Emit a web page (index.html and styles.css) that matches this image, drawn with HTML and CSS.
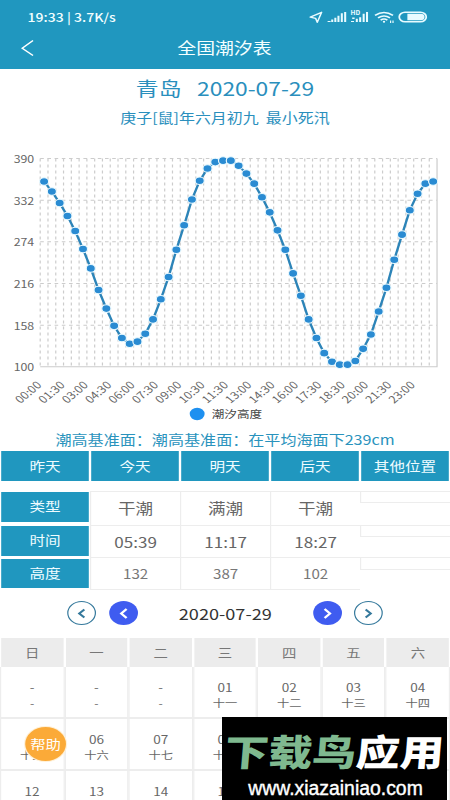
FILE: index.html
```
<!DOCTYPE html>
<html lang="zh-CN">
<head>
    <meta charset="UTF-8">
    <meta name="viewport" content="width=device-width, initial-scale=1.0">
    <title>全国潮汐表</title>
    <link rel="stylesheet" href="styles.css">
</head>

<body>
    <div class="screen">
        <header class="header">
            <div class="status-bar">
                <span>19:33 | 3.7K/s</span>
                <svg class="status-icons" width="104" height="16" viewBox="0 0 104 16">
                    <path d="M1.5 8.2 11 3.3 7.4 13.4 6 9.3Z" fill="none" stroke="#e8fbff" stroke-width="1.3" stroke-linejoin="round"/>
                    <g fill="#e8fbff">
                        <path d="M16 12h2.5v1H16zM19 10.500h1.700V13H19zM21.600 8.700h1.700V13h-1.700zM24.200 6.700h1.700V13h-1.700zM27 4.200h1.700V13H27zM29.800 3h1.700v10h-1.700z"/>
                        <path d="M35.500 12h2.500v1h-2.500zM36.500 8.500h2v1.500h-2zM39.500 9.800h1.700V13h-1.700zM42.300 8.200h1.700V13h-1.700zM45.200 4.800h1.700V13h-1.700zM48 3h1.700v10H48z"/>
                        <text class="hd" x="35" y="6.3">HD</text>
                    </g>
                    <g fill="none" stroke="#e8fbff" stroke-width="1.5">
                        <path d="M55.500 6.300q7.500-5.600 15 0M58 8.800q5-3.800 10 0M60.200 11.100q2.800-2.200 5.600 0"/>
                        <rect x="75.7" y="3.2" width="22.5" height="9.6" rx="4.8"/>
                    </g>
                    <circle cx="63" cy="12.8" r="1" fill="#e8fbff"/>
                    <path d="M68.500 11.500v2.500M70.500 11.500v2.500" stroke="#e8fbff"/>
                    <path d="M82.500 4.700H93.500a3.300 3.300 0 0 1 0 6.600H82.500z" fill="#e8fbff"/>
                </svg>
            </div>
            <div class="title-bar">
                <svg class="back" width="12" height="18" viewBox="0 0 12 18">
                    <path d="M10.5 1.5 1.5 9.2 10.5 16.5" fill="none" stroke="#fff" stroke-width="1.3"/>
                </svg>
                <h1 class="title">全国潮汐表</h1>
            </div>
        </header>

        <div class="place"><span>青岛</span><span>2020-07-29</span></div>
        <div class="lunar-date">庚子[鼠]年六月初九&nbsp; 最小死汛</div>

        <svg class="chart" width="375" height="289" viewBox="0 0 375 289"></svg>

        <div class="note">潮高基准面：潮高基准面：在平均海面下239cm</div>

        <nav class="day-tabs">
            <div class="tab">昨天</div>
            <div class="tab">今天</div>
            <div class="tab">明天</div>
            <div class="tab">后天</div>
            <div class="tab">其他位置</div>
        </nav>

        <div class="tide-table">
            <div class="label">类型</div>
            <div class="cell type">干潮</div>
            <div class="cell type">满潮</div>
            <div class="cell type">干潮</div>
            <div class="cell empty"></div>
            <div class="label">时间</div>
            <div class="cell time">05:39</div>
            <div class="cell time">11:17</div>
            <div class="cell time">18:27</div>
            <div class="cell empty"></div>
            <div class="label">高度</div>
            <div class="cell height">132</div>
            <div class="cell height">387</div>
            <div class="cell height">102</div>
            <div class="cell empty"></div>
        </div>

        <div class="date-nav">
            <div class="nav-btn outline">
                <svg width="8" height="11" viewBox="0 0 8 11"><path d="M6.3 1.5 2 5.5 6.3 9.5"/></svg>
            </div>
            <div class="nav-btn solid">
                <svg width="8" height="11" viewBox="0 0 8 11"><path d="M6.5 1 2 5.5 6.5 10"/></svg>
            </div>
            <div class="nav-date">2020-07-29</div>
            <div class="nav-btn solid">
                <svg width="8" height="11" viewBox="0 0 8 11"><path d="M1.5 1 6 5.5 1.5 10"/></svg>
            </div>
            <div class="nav-btn outline">
                <svg width="8" height="11" viewBox="0 0 8 11"><path d="M1.7 1.5 6 5.5 1.7 9.5"/></svg>
            </div>
        </div>

        <div class="calendar">
            <div class="week">日</div>
            <div class="week">一</div>
            <div class="week">二</div>
            <div class="week">三</div>
            <div class="week">四</div>
            <div class="week">五</div>
            <div class="week">六</div>

            <div class="day">-<span>-</span></div>
            <div class="day">-<span>-</span></div>
            <div class="day">-<span>-</span></div>
            <div class="day">01<span>十一</span></div>
            <div class="day">02<span>十二</span></div>
            <div class="day">03<span>十三</span></div>
            <div class="day">04<span>十四</span></div>

            <div class="day">&nbsp;<span>十五</span></div>
            <div class="day">06<span>十六</span></div>
            <div class="day">07<span>十七</span></div>
            <div class="day">08<span>十八</span></div>
            <div class="day"></div>
            <div class="day"></div>
            <div class="day"></div>

            <div class="day">12</div>
            <div class="day">13</div>
            <div class="day">14</div>
            <div class="day">15</div>
            <div class="day"></div>
            <div class="day"></div>
            <div class="day"></div>
        </div>

        <div class="help">帮助</div>
    </div>

    <div class="watermark">
        <div class="brand"><span class="green">下载鸟</span>应用</div>
        <div class="url">www.xiazainiao.com</div>
    </div>

    <script src="chart.js"></script>
</body>
</html>
```
FILE: styles.css
```
html, body {
    margin: 0;
    height: 800px;
    overflow: hidden;
}

body {
    position: relative;
    background-color: #fff;
    font-family: "Noto Sans CJK SC", sans-serif;
}

.screen {
    position: relative;
    width: 375px;
    height: 800px;
    overflow: hidden;
    transform: scaleX(1.2);
    transform-origin: 0 0;
}

.header {
    height: 68.5px;
    background-color: #2097bf;
    color: #f4ffff;
}
.status-bar {
    display: flex;
    justify-content: space-between;
    padding: 9px 0 0 23px;
    font-size: 11.7px;
    font-weight: 500;
    line-height: 16px;
}
.status-icons {
    width: 104px;
    margin-right: 14px;
}
.hd {
    font-size: 5.5px;
    font-weight: 700;
}
.title-bar {
    display: flex;
    align-items: center;
    height: 46px;
    padding: 0 18px;
}
.back {
    margin-left: -1px;
}
.title {
    flex: 1;
    margin: 0 12px 0 0;
    font-size: 15.7px;
    font-weight: 400;
    line-height: 20px;
    text-align: center;
}

.place {
    display: flex;
    justify-content: center;
    gap: 13px;
    margin-top: 6.5px;
    color: #2a8fbd;
    font-size: 19px;
    line-height: 26px;
}
.lunar-date {
    margin-top: 7px;
    color: #2a8fbd;
    font-size: 13.3px;
    line-height: 20px;
    text-align: center;
}

.chart {
    display: block;
    margin-top: 10px;
}
.chart text {
    fill: #666;
    font-size: 10.3px;
}
.chart .legend {
    fill: #444;
    font-size: 10.5px;
}
.grid {
    stroke: #ccc;
    stroke-width: 1;
    stroke-dasharray: 3 3;
}
.axis {
    fill: none;
    stroke: #ccc;
}
.curve {
    fill: none;
    stroke: #2c84b8;
    stroke-width: 2;
}
.dot {
    fill: #2a8bd2;
    stroke: #e8f9ff;
    stroke-width: 1;
}
.legend-dot {
    fill: #1e90f0;
}

.note {
    height: 24px;
    color: #2a93bd;
    font-size: 13.4px;
    line-height: 25px;
    text-align: center;
}

.day-tabs {
    display: grid;
    grid-template-columns: repeat(5, 1fr);
}
.tab,
.label {
    margin: 0 1px;
    background-color: #2097bf;
    color: #effcff;
    font-size: 13px;
    text-align: center;
}
.tab {
    height: 29.5px;
    line-height: 30px;
}

.tide-table {
    display: grid;
    grid-template-columns: repeat(5, 75px);
    grid-template-rows: 34px 32.5px 33px;
    margin-top: 10px;
}
.label {
    height: 29.5px;
    margin-top: 1.5px;
    line-height: 28px;
}
.cell {
    box-sizing: border-box;
    border: solid #ededed;
    border-width: 1.5px 0 0 1.5px;
    color: #666;
    line-height: 32px;
    text-align: center;
}
.cell.type {
    font-size: 14.6px;
}
.cell.time {
    font-size: 14.2px;
}
.cell.height {
    height: 32.5px;
    border-bottom-width: 1.5px;
    color: #777;
    font-size: 12.6px;
}
.cell.empty {
    height: 12.5px;
    border-bottom-width: 1.5px;
}

.date-nav {
    display: flex;
    align-items: center;
    justify-content: center;
    height: 46.5px;
    padding-bottom: 1.5px;
    margin-left: 0.5px;
}
.nav-btn {
    box-sizing: border-box;
    display: flex;
    align-items: center;
    justify-content: center;
    width: 24px;
    height: 24px;
    border-radius: 50%;
}
.nav-btn + .nav-btn {
    margin-left: 10.5px;
}
.nav-btn path {
    fill: none;
    stroke-width: 1.8;
}
.nav-btn.outline {
    border: 1.5px solid #35799c;
}
.nav-btn.outline path {
    stroke: #35799c;
}
.nav-btn.solid {
    background-color: #3f5cf0;
}
.nav-btn.solid path {
    stroke: #fff;
    stroke-width: 2;
}
.nav-date {
    width: 146px;
    color: #333;
    font-size: 15.1px;
    text-align: center;
}

.calendar {
    display: grid;
    grid-template-columns: repeat(7, 1fr);
    grid-template-rows: 29px repeat(3, 52.2px);
}
.week {
    margin: 0 1px;
    background-color: #ececec;
    color: #777;
    font-size: 12px;
    line-height: 29px;
    text-align: center;
}
.day {
    border: solid #ededed;
    border-width: 0 1px 2px;
    padding-top: 11.5px;
    color: #666;
    font-size: 11.3px;
    line-height: 16px;
    text-align: center;
}
.day span {
    display: block;
    font-size: 10.2px;
}

.help {
    position: absolute;
    top: 727px;
    left: 21px;
    width: 34px;
    height: 34px;
    border-radius: 50%;
    background-color: #fbaa38;
    box-shadow: 0 0 0 1px #fff1d8;
    color: #fff;
    font-size: 12.8px;
    line-height: 34px;
    text-align: center;
}

.watermark {
    position: absolute;
    top: 717px;
    left: 222px;
    width: 225px;
    height: 83px;
    background-color: #000;
    color: #fff;
    text-align: center;
}
.brand {
    height: 55px;
    margin-top: 6px;
    font-size: 36.5px;
    font-weight: 900;
    line-height: 56px;
    transform: scaleX(1.2) skewX(-4deg);
}
.brand .green {
    color: #7fb98f;
}
.url {
    margin-left: 2px;
    font-family: "Liberation Sans", sans-serif;
    font-size: 19.4px;
    line-height: 20px;
    -webkit-text-stroke: 0.4px #fff;
}
```
FILE: chart.js
```
const LEFT = 33.5, TOP = 20.5, WIDTH = 330.7, HEIGHT = 208.3, MIN = 100, MAX = 390;

const heights = [
    358, 344, 328, 310, 289, 264, 237, 207, 181, 157, 140, 132, 135, 146, 166, 194, 225,
    263, 297, 333, 359, 376, 385, 387, 387, 380, 369, 355, 336, 315, 290, 263, 230, 199,
    166, 140, 119, 107, 103, 103, 108, 125, 145, 177, 210, 249, 284, 318, 341, 355, 358
];

const times = [
    '00:00', '01:30', '03:00', '04:30', '06:00', '07:30', '09:00', '10:30', '11:30',
    '13:00', '14:30', '16:00', '17:30', '18:30', '20:00', '21:30', '23:00'
];

const chart = document.querySelector('.chart');
const band = WIDTH / heights.length;
const getX = (i) => LEFT + band * (i + 0.5);
const getY = (v) => TOP + HEIGHT * (MAX - v) / (MAX - MIN);

let html = '';

// grid
for (let i = 0; i < heights.length; i++) {
    const x = LEFT + band * i;
    html += `<line class="grid" x1="${x}" y1="${TOP}" x2="${x}" y2="${TOP + HEIGHT}"/>`;
}
for (let v = MIN; v <= MAX; v += 58) {
    const y = getY(v);
    if (v > MIN) {
        html += `<line class="grid" x1="${LEFT}" y1="${y}" x2="${LEFT + WIDTH}" y2="${y}"/>`;
    }
    html += `<text x="28.5" y="${y + 4.5}" text-anchor="end">${v}</text>`;
}
html += `<path class="axis" d="M${LEFT} ${TOP + HEIGHT}h${WIDTH}v${-HEIGHT}"/>`;

// time labels
times.forEach((time, i) => {
    const x = getX(i * 3) - 1.5, y = TOP + HEIGHT + 19;
    html += `<text text-anchor="end" transform="translate(${x} ${y}) rotate(-45)">${time}</text>`;
});

// curve
const points = heights.map((v, i) => `${getX(i)},${getY(v)}`).join(' ');
html += `<polyline class="curve" points="${points}"/>`;
heights.forEach((v, i) => {
    html += `<circle class="dot" cx="${getX(i)}" cy="${getY(v)}" r="3.8"/>`;
});

// legend
html += '<circle class="legend-dot" cx="164.3" cy="276" r="6.2"/>';
html += '<text class="legend" x="176.5" y="279.7">潮汐高度</text>';

chart.innerHTML = html;
```
